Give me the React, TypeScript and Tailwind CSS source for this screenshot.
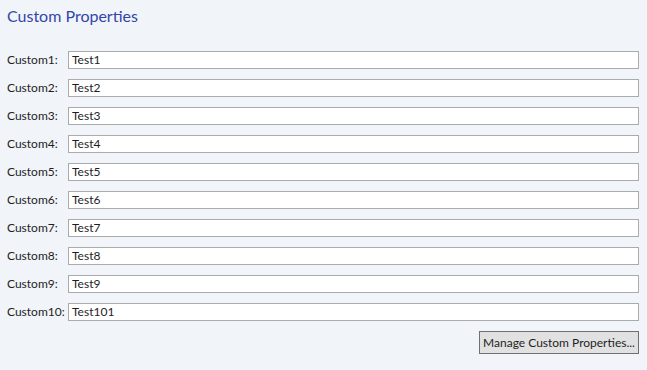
import React from "react";

const rows = [
  ["Custom1:", "Test1"],
  ["Custom2:", "Test2"],
  ["Custom3:", "Test3"],
  ["Custom4:", "Test4"],
  ["Custom5:", "Test5"],
  ["Custom6:", "Test6"],
  ["Custom7:", "Test7"],
  ["Custom8:", "Test8"],
  ["Custom9:", "Test9"],
  ["Custom10:", "Test101"],
];

export default function App() {
  return (
    <div
      className="w-[647px] h-[370px] bg-[#f1f4f9] text-[#1e1e1e] text-[12px] overflow-hidden"
      style={{ fontFamily: "Lato, 'Open Sans', sans-serif" }}
    >
      <div className="pl-[7px] pt-[6px] h-[51px] text-[16px] text-[#3346a8] leading-[20px]">
        Custom Properties
      </div>
      <div className="flex flex-col gap-[10px] pr-[8px]">
        {rows.map(([l, v]) => (
          <div key={l} className="flex items-center h-[18px]">
            <div className="w-[68px] pl-[7px] shrink-0 leading-[18px]">{l}</div>
            <div className="flex-1 h-[18px] bg-white border border-[#ababab] pl-[3px] leading-[16px]">
              {v}
            </div>
          </div>
        ))}
      </div>
      <div className="flex justify-end pr-[8px] pt-[10px]">
        <div className="w-[160px] h-[23px] bg-[#e1e1e1] border border-[#707070] flex items-center justify-center leading-[20px]">
          Manage Custom Properties...
        </div>
      </div>
    </div>
  );
}
